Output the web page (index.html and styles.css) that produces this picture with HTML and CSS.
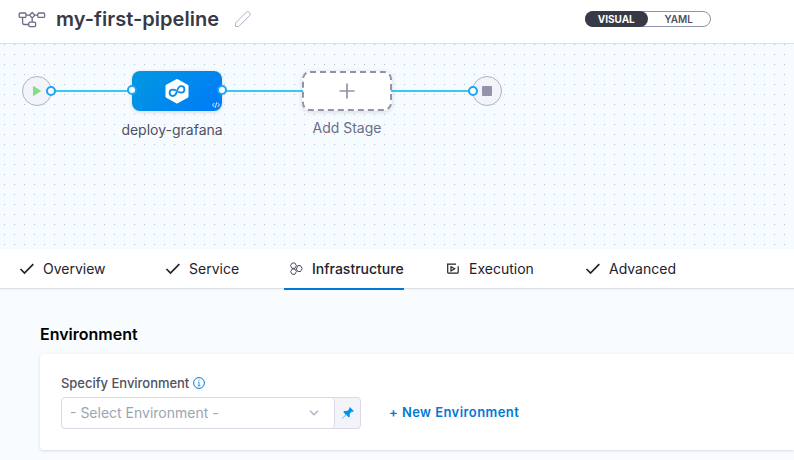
FILE: index.html
```html
<!DOCTYPE html>
<html lang="en">
<head>
<meta charset="utf-8">
<title>my-first-pipeline</title>
<link rel="stylesheet" href="styles.css">
</head>
<body>
<header class="header">
  <svg class="pipeline-icon" width="28" height="18" viewBox="0 0 28 18" fill="none" stroke="#6b6d85" stroke-width="1.3">
    <rect x="1.200" y="2" width="6.800" height="4.400" rx="1"/><rect x="19.800" y="2" width="6.800" height="4.400" rx="1"/><rect x="10.800" y="11.200" width="6.800" height="4.400" rx="1"/>
    <path d="M14.200 1.500 16.900 4.200 14.200 6.900 11.500 4.200ZM8 4.200h3.500M16.900 4.200h2.900M14.200 6.900v4.300M4.600 6.400v5.700q0 1.400 1.400 1.400h4.800"/>
  </svg>
  <h1 class="title">my-first-pipeline</h1>
  <svg class="edit-icon" width="18" height="18" viewBox="0 0 18 18" fill="none" stroke="#b0b1c4" stroke-width="1">
    <path d="M1.500 16.500v-3.500L12.500 2q1.100-1 2.200 0l1.100 1.100q1 1.100 0 2.200L4.800 16.500Z"/>
  </svg>
  <div class="toggle"><span class="toggle-item active">VISUAL</span><span class="toggle-item">YAML</span></div>
</header>
<main class="canvas">
  <div class="link"></div>
  <div class="terminal start"><svg width="10" height="12" viewBox="0 0 10 12"><path d="M1.500 1.500 8.500 6l-7 4.500Z" fill="#86dd83" stroke="#86dd83" stroke-linejoin="round"/></svg></div>
  <div class="stage deploy">
    <svg width="24" height="26" viewBox="0 0 24 26" fill="none">
      <path d="M12 2.500 22 8v10.500L12 24 2 18.500V8Z" fill="#fff" stroke="#fff" stroke-width="3" stroke-linejoin="round"/>
      <path d="M10.300 12.200C9.600 11.600 8.900 11.600 7.800 11.600a3.200 3.200 0 0 0 0 6.400c5.700 0 2.700-9.800 8.400-9.800a3.200 3.200 0 0 1 0 6.400c-1.100 0-1.800 0-2.500-.6" stroke="#078ce9" stroke-width="1.800" stroke-linecap="round"/>
    </svg>
    <svg class="code-mark" width="8" height="6" viewBox="0 0 8 6" fill="none" stroke="#e6f5ff" stroke-width=".9"><path d="M2.200 1 .6 3l1.600 2M5.800 1l1.600 2-1.600 2M4.700.2 3.300 5.800"/></svg>
  </div>
  <div class="stage-name deploy-name">deploy-grafana</div>
  <div class="stage add">
    <svg width="90" height="40" viewBox="0 0 90 40" fill="none" stroke="#9293ab">
      <rect x="1" y="1" width="88" height="38" rx="7" fill="#fff" stroke-width="2" stroke-dasharray="6 4"/>
      <path d="M37.500 20h15M45 12.500v15" stroke-width="1.700"/>
    </svg>
  </div>
  <div class="stage-name add-name">Add Stage</div>
  <div class="terminal stop"><span class="stop-mark"></span></div>
  <i class="port p1"></i><i class="port p2"></i><i class="port p3"></i><i class="port p4"></i>
</main>
<nav class="tabs">
  <div class="tab t1"><svg width="16" height="14" viewBox="0 0 16 14" fill="none" stroke="#22222a" stroke-width="1.700"><path d="M1.500 7 5.500 11 14.300 2.200"/></svg><span>Overview</span></div>
  <div class="tab t2"><svg width="16" height="14" viewBox="0 0 16 14" fill="none" stroke="#22222a" stroke-width="1.700"><path d="M1.500 7 5.500 11 14.300 2.200"/></svg><span>Service</span></div>
  <div class="tab t3 selected"><svg width="16" height="14" viewBox="0 0 16 14" fill="none" stroke="#383946" stroke-width=".9" stroke-linejoin="round"><path d="M4.200 1h2.600L8.400 3.600 6.900 6.300H4L2.500 3.600ZM4.300 7h2.600l1.500 2.500-1.500 2.800H4.200L2.600 9.600ZM9.800 3.600h2.700l1.700 3-1.700 2.900H9.800L8.400 7Z"/></svg><span>Infrastructure</span></div>
  <div class="tab t4"><svg width="16" height="14" viewBox="0 0 16 14" fill="none" stroke="#22222a" stroke-width="1.200"><path d="M2 2.100H11M2.700 2.100V10.200q0 1 1 1H12.200q1 0 1-1V4.200M6 4.700v4.200L9.700 6.800Z"/></svg><span>Execution</span></div>
  <div class="tab t5"><svg width="16" height="14" viewBox="0 0 16 14" fill="none" stroke="#22222a" stroke-width="1.700"><path d="M1.500 7 5.500 11 14.300 2.200"/></svg><span>Advanced</span></div>
</nav>
<section class="content">
  <h2 class="heading">Environment</h2>
  <div class="card">
    <div class="label"><span>Specify Environment</span>
      <svg width="12" height="12" viewBox="0 0 12 12" fill="none" stroke="#0278d5"><circle cx="6" cy="6" r="5.400" stroke-width="1"/><path d="M4.900 5.200H6v3.600M4.700 8.800h2.600M5.500 3.200h1" stroke-width=".8"/></svg>
    </div>
    <div class="row">
      <div class="field">
        <div class="select"><span>- Select Environment -</span><svg width="10" height="6" viewBox="0 0 10 6" fill="none" stroke="#b0b1c4" stroke-width="1.400"><path d="M1 .8 5 4.800 9 .8"/></svg></div>
        <div class="pin"><svg width="14" height="14" viewBox="0 0 14 14" fill="#0092e4"><path d="M8.700 1 13 5.200l-1.200.5-.9-.2-2.200 2.300.1 2.800-1 .8-2.500-2.600L1 13l-.2-.2 3.900-4.400L2.300 6l.9-1 2.900.1 2.300-2.200-.2-1Z"/></svg></div>
      </div>
      <a class="new">+ New Environment</a>
    </div>
  </div>
</section>
</body>
</html>
```

FILE: styles.css
```css
* { box-sizing: border-box; }
body { margin: 0; width: 794px; height: 460px; overflow: hidden; font-family: Inter, sans-serif; background: #f8fcff; color: #22222a; }
svg { display: block; flex: none; }
.header { height: 44px; display: flex; align-items: flex-start; background: #fff; border-bottom: 1px solid #dfe1e6; }
.pipeline-icon { margin: 11px 0 0 18px; }
.title { margin: 7px 0 0 10px; width: 178px; font-size: 20px; line-height: 24px; font-weight: 600; letter-spacing: .03px; color: #383946; white-space: nowrap; }
.edit-icon { margin-top: 10px; }
.toggle { display: flex; width: 126px; height: 16px; margin: 11px 0 0 333px; border: 1px solid #9293ab; border-radius: 8px; }
.toggle-item { flex: 1; font-size: 10px; line-height: 15px; font-weight: 600; text-align: center; color: #4f5162; }
.toggle-item.active { margin: -1px 0 -1px -1px; line-height: 17px; background: #383946; border-radius: 8px; color: #fff; font-weight: 700; height: 16px; }
.canvas { position: relative; height: 205px; background: #f6fbff radial-gradient(circle at 4.5px .5px, #b5bdc6 .7px, transparent .8px) 0 0 / 10px 10px; }
.link { position: absolute; left: 50px; top: 46px; width: 423px; height: 2px; background: #3dc7f6; }
.terminal { position: absolute; top: 32px; width: 30px; height: 30px; border: 1px solid #b0b1c4; border-radius: 50%; background: #f3f3fa; display: flex; align-items: center; justify-content: center; }
.start { left: 22px; }
.stop { left: 472px; }
.stop-mark { width: 10px; height: 10px; border-radius: 1px; background: #9293ab; }
.stage { position: absolute; top: 27px; width: 90px; height: 40px; border-radius: 8px; box-shadow: 0 1px 4px rgba(96, 97, 112, .22); }
.deploy { left: 132px; display: flex; align-items: center; justify-content: center; background: linear-gradient(135deg, #0095e4 15%, #007df7 90%); }
.add { left: 302px; }
.code-mark { position: absolute; right: 2px; bottom: 3px; }
.stage-name { position: absolute; width: 120px; text-align: center; font-size: 14px; line-height: 18px; white-space: nowrap; }
.deploy-name { left: 112px; top: 77px; color: #4f5162; }
.add-name { left: 287px; top: 75px; color: #6b6d85; }
.port { position: absolute; top: 42px; width: 10px; height: 10px; border: 2px solid #1aa5f8; border-radius: 50%; background: #fff; }
.p1 { left: 46px; }
.p2 { left: 127px; top: 41px; }
.p3 { left: 217px; top: 41px; }
.p4 { left: 468px; }
.tabs { position: relative; height: 40px; display: flex; background: #fff; border-bottom: 1px solid #dfe1e6; box-shadow: 0 1px 1px rgba(40, 41, 61, .04); }
.tab { display: flex; gap: 8px; height: 41px; align-items: flex-start; padding-top: 13px; font-size: 14px; line-height: 14px; white-space: nowrap; }
.t1 { width: 146px; padding-left: 19px; }
.t2 { width: 138px; padding-left: 19px; }
.t3 { width: 120px; padding-left: 4px; gap: 8px; }
.t4 { padding-left: 41px; width: 162px; }
.t5 { padding-left: 19px; }
.selected { font-weight: 500; border-bottom: 2px solid #0278d5; }
.heading { margin: 0 0 0 40px; padding-top: 36px; font-size: 16px; line-height: 19px; font-weight: 600; color: #000; }
.card { margin: 10px 0 0 40px; height: 96px; padding: 21px 0 0 21px; background: #fff; border-radius: 4px 0 0 4px; box-shadow: 0 1px 3px rgba(96, 97, 112, .22); }
.label { display: flex; align-items: center; gap: 4px; height: 16px; font-size: 13px; letter-spacing: -.03px; font-weight: 500; color: #4f5162; }
.row { display: flex; align-items: center; margin-top: 6px; }
.field { display: flex; width: 300px; height: 32px; border: 1px solid #d9dae5; border-radius: 4px; background: #f3f3fa; }
.select { display: flex; align-items: center; justify-content: space-between; width: 273px; padding: 0 15px 0 8px; border-right: 1px solid #d9dae5; border-radius: 4px; background: #fff; font-size: 14px; color: #9aa5b1; }
.select span { margin-top: -2px; }
.pin { flex: 1; display: flex; align-items: center; justify-content: center; }
.new { margin: -2px 0 0 28px; font-size: 13px; font-weight: 600; letter-spacing: .43px; color: #0278d5; }
```
